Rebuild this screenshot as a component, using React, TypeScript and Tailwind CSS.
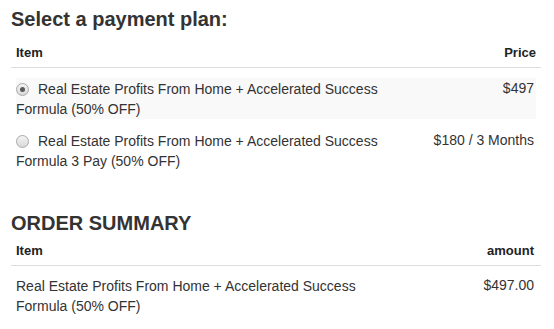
import React from "react";

function Radio({ checked }: { checked?: boolean }) {
  return (
    <span className="relative inline-block w-[13px] h-[13px] rounded-full border border-[#a9a9a9] bg-gradient-to-b from-[#f4f4f4] to-[#d9d9d9] mr-[9px] align-[-2px]">
      {checked && (
        <span className="absolute left-[3px] top-[3px] w-[5px] h-[5px] rounded-full bg-[#5a5a5a]" />
      )}
    </span>
  );
}

export default function App() {
  return (
    <div
      className="w-[554px] h-[329px] bg-white text-[#333] overflow-hidden pl-[11px] pr-[13px]"
      style={{ fontFamily: '"Liberation Sans", Arial, sans-serif' }}
    >
      <h2 className="pt-[7px] text-[20px] leading-[24px] font-bold text-[#333]">
        Select a payment plan:
      </h2>
      <div className="mt-[12px] flex justify-between px-[5px] pb-[4px] border-b border-[#ddd] text-[13px] leading-[20px] font-bold text-[#222]">
        <span>Item</span>
        <span>Price</span>
      </div>
      <div className="mt-[10px] px-[5px]">
        <div className="flex justify-between bg-[#f9f9f9] h-[41px] text-[14px] leading-[20px]">
          <div className="w-[390px] pt-[1px]">
            <Radio checked />
            Real Estate Profits From Home + Accelerated Success Formula (50% OFF)
          </div>
          <div className="pt-0 pr-[2px]">$497</div>
        </div>
        <div className="mt-[11px] flex justify-between text-[14px] leading-[20px]">
          <div className="w-[390px] pt-[1px]">
            <Radio />
            Real Estate Profits From Home + Accelerated Success Formula 3 Pay (50% OFF)
          </div>
          <div className="pt-0 pr-[2px]">$180 / 3 Months</div>
        </div>
      </div>
      <h2 className="mt-[40px] text-[20px] leading-[24px] font-bold text-[#333]">
        ORDER SUMMARY
      </h2>
      <div className="mt-[6px] flex justify-between px-[5px] pb-[4px] border-b border-[#ddd] text-[13px] leading-[20px] font-bold text-[#222]">
        <span>Item</span>
        <span className="pr-[2px]">amount</span>
      </div>
      <div className="mt-[9px] px-[5px] flex justify-between text-[14px] leading-[20px]">
        <div className="w-[370px] pt-[1px]">
          Real Estate Profits From Home + Accelerated Success Formula (50% OFF)
        </div>
        <div className="pr-[2px]">$497.00</div>
      </div>
    </div>
  );
}
